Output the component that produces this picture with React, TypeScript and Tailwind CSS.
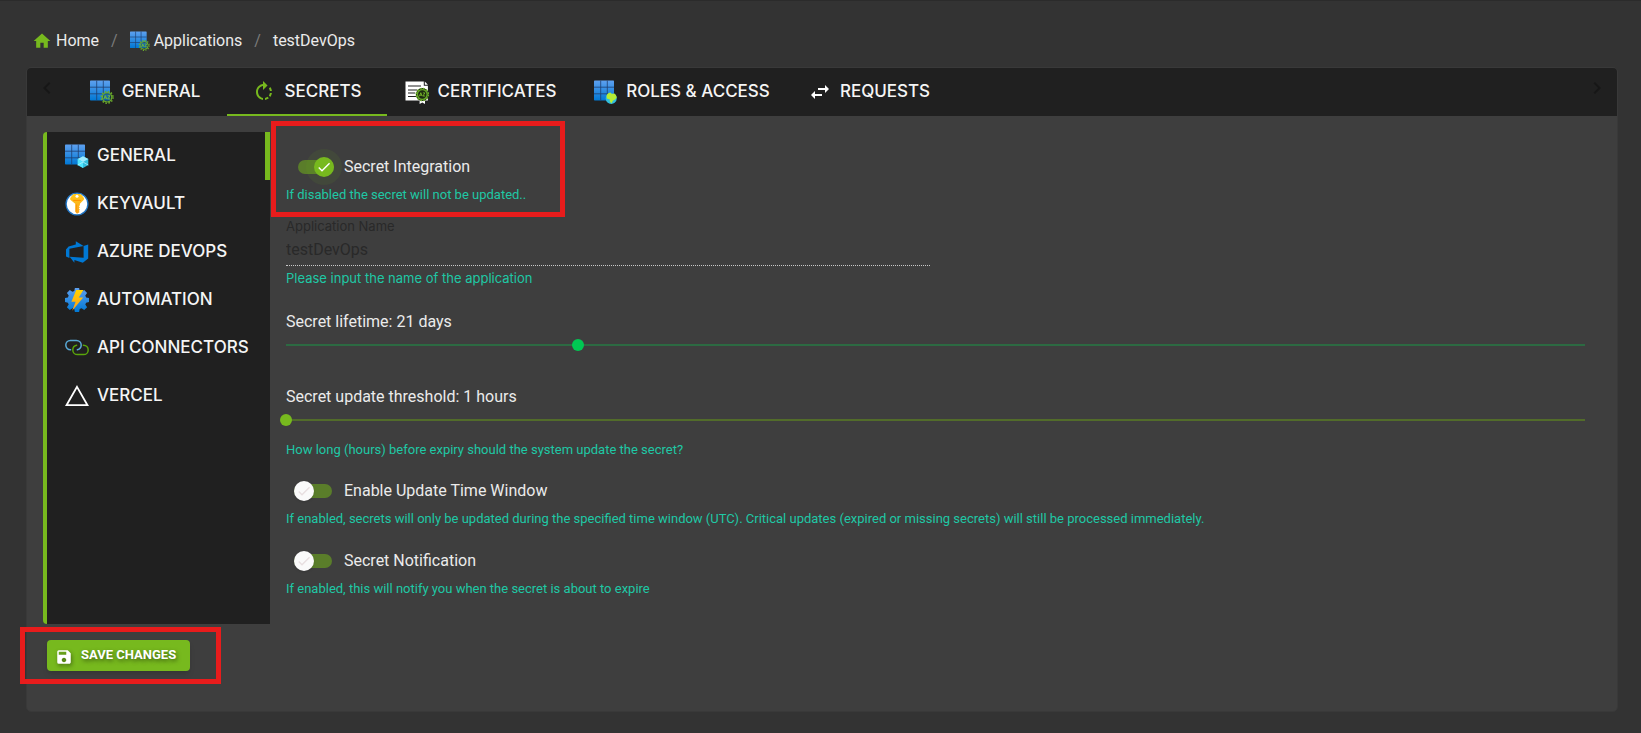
import { useState, type ReactNode } from "react";
import { MdHome, MdRotateRight, MdSave, MdSwapHoriz, MdChevronLeft, MdChevronRight, MdCheck } from "react-icons/md";

function Grid({ id, children }: { id: string; children?: ReactNode }) {
  return (
    <svg viewBox="0 0 24 24" className="h-6 w-6 shrink-0" aria-hidden="true">
      <defs>
        <linearGradient id={id} x1="0" y1="0" x2="0" y2="1">
          <stop offset="0" stopColor="#5ea0ef" />
          <stop offset="1" stopColor="#0078d4" />
        </linearGradient>
      </defs>
      <rect x="0" y="0.5" width="20" height="20" rx="0.7" fill={`url(#${id})`} />
      <path d="M6.7 0.5v20M13.3 0.5v20M0 7.2h20M0 13.8h20" stroke="#1f3f70" strokeWidth="0.8" />
      {children}
    </svg>
  );
}

function GearBadge({ cx, cy }: { cx: number; cy: number }) {
  return (
    <g transform={`translate(${cx} ${cy})`}>
      <circle r="4.7" fill="#1f4a5a" fillOpacity="0.4" stroke="#6cad2c" strokeWidth="1.2" />
      <circle r="5.9" fill="none" stroke="#6cad2c" strokeWidth="1.5" strokeDasharray="1.5 1.59" />
      <path d="M-3.3 1.8l1.5-3.6l1.5 3.6M-2.8 0.6h2M0.6-1.6h2.4l-2.4 3.2h2.6" fill="none" stroke="#7fc42c" strokeWidth="0.8" />
    </g>
  );
}

const AppsIcon = ({ id }: { id: string }) => (
  <Grid id={id}>
    <GearBadge cx={17.1} cy={17.3} />
  </Grid>
);

const RolesIcon = () => (
  <Grid id="roles">
    <circle cx="17.2" cy="18.4" r="5.5" fill="#32bedd" />
    <path d="M12.600 15.400c1-2 2.400-2.800 3.800-2.900l1.300 1.500 2.600-.6c1.400.8 2.400 2.600 2.400 4.400l-2 2-1.700.6-1.600 3.200-1.700-2.300.2-1.800-3-1.100z" fill="#b4ec36" />
  </Grid>
);

const CubeGridIcon = () => (
  <Grid id="cube">
    <path d="M18 12.200l5.300 2.900v6L18 24l-5.300-2.900v-6z" fill="#32bedd" />
    <path d="M18 12.200l5.300 2.900L18 18l-5.300-2.900z" fill="#9cebff" />
    <path d="M12.700 15.100L18 18v6l-5.300-2.900z" fill="#50e6ff" />
    <path d="M12.700 21.100L18 18l5.300 3.100" fill="none" stroke="#c3f1ff" strokeWidth="0.7" />
  </Grid>
);

const CertificateIcon = () => (
  <svg viewBox="0 0 24 24" className="h-6 w-6 shrink-0" aria-hidden="true">
    <path d="M0.500 1.500h18.300v4.200h4.100v14.800H0.500z" fill="#fff" />
    <path d="M19.800 1.500l3.100 3.300h-3.100z" fill="#fff" />
    <path d="M3 6h13M3 10h9M3 13h7M3 16.500h8" stroke="#222" strokeWidth="1.200" />
    <path d="M14.600 18h5.400v6l-2.700-1.500-2.700 1.500z" fill="#fff" />
    <circle cx="17.300" cy="14.500" r="6.400" fill="#1d2b12" />
    <circle cx="17.300" cy="14.500" r="4.900" fill="none" stroke="#68a829" strokeWidth="1.400" />
    <circle cx="17.300" cy="14.500" r="6.100" fill="none" stroke="#68a829" strokeWidth="1.400" strokeDasharray="1.800 1.390" />
    <path d="M14.400 16.200l1.400-3.500 1.400 3.500M14.900 15.200h1.800M17.900 12.900h2l-2 3.100h2.200" fill="none" stroke="#7fc42c" strokeWidth="0.800" />
  </svg>
);

const KeyIcon = () => (
  <svg viewBox="0 0 24 24" className="h-6 w-6 shrink-0" aria-hidden="true">
    <defs>
      <linearGradient id="key" x1="0" y1="0" x2="0" y2="1">
        <stop offset="0" stopColor="#ffca1c" />
        <stop offset="1" stopColor="#faa21d" />
      </linearGradient>
    </defs>
    <circle cx="12" cy="12" r="10.9" fill="#fff" stroke="#1f74c4" strokeWidth="1.3" />
    <path d="M9.2 1.9h5.6c.6 0 1 .2 1.4.6l2.4 3c.6.9.6 1.8 0 2.6l-3.7 3.7v1.400l-1.100 1 1.100 1.100-1.100 1.200 1.100 1.200-1.100 1.200.9 1.200L12 21.800l-1.800-2v-8L5.600 8.100c-.6-.8-.6-1.700 0-2.600l2.300-3c.4-.4.8-.6 1.300-.6z" fill="url(#key)" />
    <circle cx="12" cy="4.300" r="1.500" fill="#fff" />
    <path d="M8.200 8.400h7.600" stroke="#ff9300" strokeWidth="1.100" />
    <path d="M11.400 12.400v7" stroke="#ff9300" strokeWidth="0.800" />
  </svg>
);

const DevOpsIcon = () => (
  <svg viewBox="0 0 24 24" className="h-6 w-6 shrink-0" aria-hidden="true">
    <path
      d="M23.200 4.600v13.800l-5.400 4.300-8.400-2.800v2.800l-4.800-6 14 1.100V5.900zM18.600 5.900L10.800 1.300v3.100L3.600 6.500 1 9.600v6.800l3.400 1.500V8.800z"
      fill="#0078d4"
    />
  </svg>
);

const AutomationIcon = () => (
  <svg viewBox="0 0 24 24" className="h-6 w-6 shrink-0" aria-hidden="true">
    <defs>
      <linearGradient id="gear" x1="0" y1="0" x2="0" y2="1">
        <stop offset="0" stopColor="#5ea0ef" />
        <stop offset="1" stopColor="#0078d4" />
      </linearGradient>
      <linearGradient id="bolt" x1="0" y1="0" x2="0" y2="1">
        <stop offset="0" stopColor="#ffd400" />
        <stop offset="1" stopColor="#ff9a1c" />
      </linearGradient>
    </defs>
    <path
      d="M9.9 0h4.200l.6 3 1.900.8L19.200 2l2.900 2.900-1.800 2.600.8 1.900 2.900.5v4.200l-2.900.6-.8 1.900 1.800 2.600-2.900 2.900-2.600-1.800-1.900.8-.6 2.900H9.900l-.6-2.900-1.900-.8-2.600 1.800-2.900-2.900 1.800-2.600-.8-1.900L0 14.100V9.900l2.900-.5.8-1.900L1.900 4.900 4.800 2l2.600 1.800 1.900-.8z"
      fill="url(#gear)"
    />
    <path d="M11.200 2h7.200l-4.600 7.600h4.400L7.200 22.800l3.400-9H6.400z" fill="url(#bolt)" />
  </svg>
);

const ConnectorIcon = () => (
  <svg viewBox="0 0 24 24" className="h-6 w-6 shrink-0" fill="none" strokeWidth="1.5" strokeLinecap="round" aria-hidden="true">
    <path d="M5.600 13.800C2.800 13.800.8 11.700.8 9.100S2.800 4.400 5.400 4.400h6c2.800 0 4.800 2 4.800 4.700 0 2.400-1.600 4.200-3.800 4.700" stroke="#59a9d6" />
    <path d="M18.400 9.200c2.800 0 4.800 2.100 4.800 4.700s-2 4.700-4.600 4.700h-6c-2.800 0-4.800-2-4.800-4.700 0-2.400 1.600-4.200 3.800-4.700" stroke="#5aa50b" />
  </svg>
);

const VercelIcon = () => (
  <svg viewBox="0 0 24 24" className="h-6 w-6 shrink-0" aria-hidden="true">
    <path d="M12 2.900L22.500 21.200H1.500z" fill="none" stroke="#fff" strokeWidth="1.800" />
  </svg>
);

const tabs = [
  { name: "GENERAL", icon: <AppsIcon id="tabapps" />, size: "min-w-[160px] pr-5" },
  { name: "SECRETS", icon: <MdRotateRight className="h-6 w-6 shrink-0 text-[#77b91e]" />, size: "min-w-[160px] pr-4" },
  { name: "CERTIFICATES", icon: <CertificateIcon />, size: "min-w-[188px] pr-4" },
  { name: "ROLES & ACCESS", icon: <RolesIcon />, size: "min-w-[214px] pr-4" },
  { name: "REQUESTS", icon: <MdSwapHoriz className="h-6 w-6 shrink-0 text-white" />, size: "min-w-[160px] pr-4" },
];

const sections = [
  { name: "GENERAL", icon: <CubeGridIcon /> },
  { name: "KEYVAULT", icon: <KeyIcon /> },
  { name: "AZURE DEVOPS", icon: <DevOpsIcon /> },
  { name: "AUTOMATION", icon: <AutomationIcon /> },
  { name: "API CONNECTORS", icon: <ConnectorIcon /> },
  { name: "VERCEL", icon: <VercelIcon /> },
];

function Hint({ children, className = "" }: { children: ReactNode; className?: string }) {
  return <p className={`text-[13px] leading-5 text-[#1ec8a5] ${className}`}>{children}</p>;
}

function Switch({ label, initial = false, className = "" }: { label: string; initial?: boolean; className?: string }) {
  const [on, setOn] = useState(initial);
  return (
    <label className={`flex h-9 w-fit cursor-pointer items-center pl-2 ${className}`}>
      <input type="checkbox" role="switch" className="sr-only" checked={on} onChange={(e) => setOn(e.target.checked)} />
      <span className={`flex h-5 items-center ${on ? "mr-2.5 w-10 pl-1" : "mr-3 w-[38px]"}`}>
        <span className={`flex h-[14px] w-full items-center rounded-full bg-[#5a7d2a] ${on ? "justify-end" : "justify-start"}`}>
          <span
            className={`flex h-5 w-5 shrink-0 items-center justify-center rounded-full ${
              on ? "bg-[#77b91e] text-white ring-8 ring-[#77b91e]/8" : "bg-[#fafafa] text-[#e8dfe0] shadow-sm"
            }`}
          >
            <MdCheck className="h-4 w-4" />
          </span>
        </span>
      </span>
      <span className="text-base leading-6 text-[#ebebeb]">{label}</span>
    </label>
  );
}

export default function App() {
  const [tab, setTab] = useState("SECRETS");
  const [section, setSection] = useState("GENERAL");
  const [days, setDays] = useState(21);
  const [hours, setHours] = useState(1);
  const slider =
    "-mx-1.5 h-6 w-[calc(100%+12px)] shrink-0 cursor-pointer appearance-none bg-transparent [&::-webkit-slider-thumb]:h-3 [&::-webkit-slider-thumb]:w-3 [&::-webkit-slider-thumb]:appearance-none [&::-webkit-slider-thumb]:rounded-full";

  return (
    <div className="min-h-screen border-t border-[#2b2b2b] bg-[#333333] pt-7 pr-[23px] pb-4 pl-[26px] font-['Roboto',sans-serif] text-base text-[#ebebeb]">
      <nav aria-label="Breadcrumb">
        <ol className="flex h-6 items-center pl-1.5">
          <li>
            <a href="#home" className="flex items-center gap-1">
              <MdHome className="h-5 w-5 text-[#77b91e]" />
              Home
            </a>
          </li>
          <li aria-hidden="true" className="px-3 text-[#7b7b7b]">/</li>
          <li>
            <a href="#applications" className="flex items-center gap-1">
              <svg viewBox="0 0 24 24" className="h-5 w-5" aria-hidden="true">
                <AppsIcon id="crumb" />
              </svg>
              Applications
            </a>
          </li>
          <li aria-hidden="true" className="px-3 text-[#7b7b7b]">/</li>
          <li aria-current="page">testDevOps</li>
        </ol>
      </nav>

      <main className="mt-[14px] rounded-[5px] border border-[#393939] bg-[#3e3e3e] pb-10">
        <div className="flex h-12 items-center justify-between rounded-t bg-[#202020] pr-2">
          <button aria-label="Scroll tabs left" className="flex h-full w-10 justify-center pt-2 text-[#171717]">
            <MdChevronLeft className="h-6 w-6" />
          </button>
          <div role="tablist" className="flex h-full flex-1">
            {tabs.map((t) => (
              <button
                key={t.name}
                role="tab"
                aria-selected={tab === t.name}
                onClick={() => setTab(t.name)}
                className={`flex h-full items-center justify-center gap-2 border-b-2 pt-0.5 pl-4 font-['Inter',sans-serif] text-[17px] font-medium whitespace-nowrap text-[#f5f5f5] ${t.size} ${
                  tab === t.name ? "border-[#77b91e]" : "border-transparent"
                }`}
              >
                {t.icon}
                {t.name}
              </button>
            ))}
          </div>
          <button aria-label="Scroll tabs right" className="h-full pb-2 text-[#171717]">
            <MdChevronRight className="h-6 w-6" />
          </button>
        </div>

        <div className="flex px-4 pt-4">
          <div role="tablist" aria-orientation="vertical" className="flex w-[227px] shrink-0 flex-col rounded-l border-l-4 border-[#77b91e] bg-[#202020]">
            {sections.map((s) => (
              <button
                key={s.name}
                role="tab"
                aria-selected={section === s.name}
                onClick={() => setSection(s.name)}
                className={`flex h-12 items-center gap-2 border-r-[5px] pl-[18px] font-['Inter',sans-serif] text-[17px] font-medium whitespace-nowrap text-[#f5f5f5] ${
                  section === s.name ? "border-[#77b91e]" : "border-transparent"
                }`}
              >
                {s.icon}
                {s.name}
              </button>
            ))}
          </div>

          <form className="relative flex-1 px-4 pt-[17px] pb-[25px]">
            <div className="pointer-events-none absolute -top-[11px] left-px h-24 w-[294px] border-[5px] border-[#e81c1c]" />
            <Switch label="Secret Integration" initial />
            <Hint>If disabled the secret will not be updated..</Hint>

            <div className="mt-[11px] max-w-[644px] font-['Inter',sans-serif]">
              <label htmlFor="app-name" className="block text-[13px] leading-5 text-[#292929]">
                Application Name
              </label>
              <input
                id="app-name"
                disabled
                value="testDevOps"
                className="block h-[30px] w-full border-b border-dotted border-[#c8c8c8] bg-transparent pb-0.5 font-['Roboto',sans-serif] text-base text-[#292929]"
              />
              <Hint className="mt-0.5">Please input the name of the application</Hint>
            </div>

            <label htmlFor="lifetime" className="mt-[22px] -mb-px block leading-6">
              Secret lifetime: {days} days
            </label>
            <div className="flex h-6 bg-[linear-gradient(#2c6a42,#2c6a42)] bg-[length:100%_2px] bg-center bg-no-repeat">
              <input
                id="lifetime"
                type="range"
                min={1}
                max={90}
                value={days}
                onChange={(e) => setDays(Number(e.target.value))}
                className={`${slider} [&::-webkit-slider-thumb]:bg-[#00c853]`}
              />
            </div>

            <label htmlFor="threshold" className="mt-7 -mb-px block leading-6">
              Secret update threshold: {hours} hours
            </label>
            <div className="flex h-6 bg-[linear-gradient(#526c2a,#526c2a)] bg-[length:100%_2px] bg-center bg-no-repeat">
              <input
                id="threshold"
                type="range"
                min={1}
                max={720}
                value={hours}
                onChange={(e) => setHours(Number(e.target.value))}
                className={`${slider} [&::-webkit-slider-thumb]:bg-[#77b91e]`}
              />
            </div>
            <Hint className="mt-2">How long (hours) before expiry should the system update the secret?</Hint>

            <Switch label="Enable Update Time Window" className="mt-[13px]" />
            <Hint>
              If enabled, secrets will only be updated during the specified time window (UTC). Critical updates (expired or missing
              secrets) will still be processed immediately.
            </Hint>

            <Switch label="Secret Notification" className="mt-[14px]" />
            <Hint>If enabled, this will notify you when the secret is about to expire</Hint>
          </form>
        </div>

        <div className="relative mt-4 ml-5 w-fit">
          <button className="flex h-[31px] items-center gap-2 rounded bg-[#77b91e] pr-3.5 pb-0.5 pl-2 text-[13px] font-bold text-white shadow-md [text-shadow:1px_2px_4px_#00000080]">
            <MdSave className="mt-1 h-[18px] w-[18px] drop-shadow-[1px_2px_2px_#00000066]" />
            SAVE CHANGES
          </button>
          <div className="pointer-events-none absolute -top-[13px] -left-[27px] h-[57px] w-[201px] border-[5px] border-[#e81c1c]" />
        </div>
      </main>
    </div>
  );
}
